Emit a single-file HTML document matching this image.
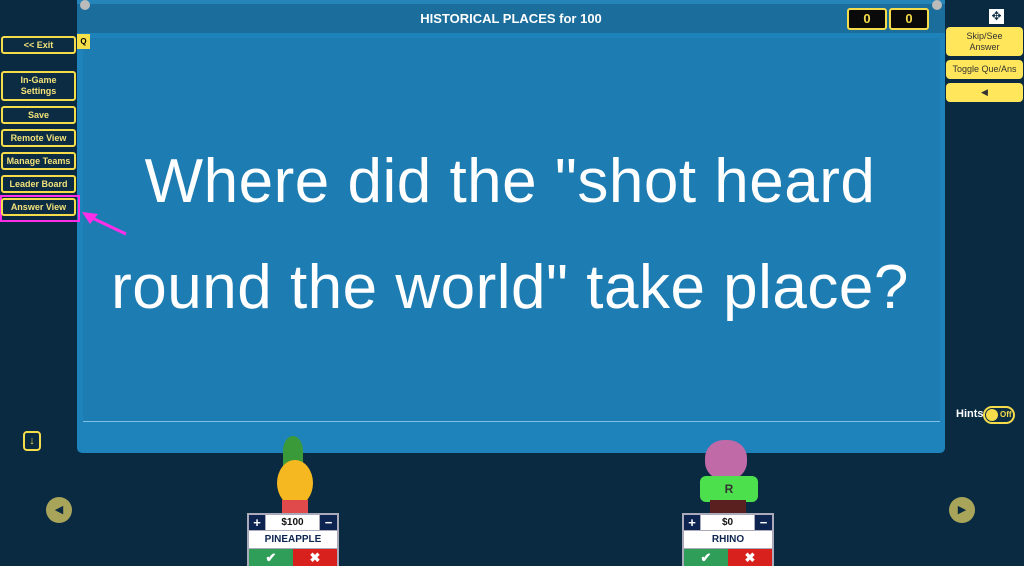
<!DOCTYPE html><html><head><style>
body{margin:0;width:1024px;height:566px;background:#0a2a42;position:relative;overflow:hidden;font-family:"Liberation Sans",sans-serif}
.a{position:absolute}
.lb{position:absolute;left:1px;width:75px;background:#0c2c44;border:2px solid #f5dc4a;border-radius:3px;color:#f3e27a;font-size:9px;font-weight:bold;text-align:center;box-sizing:border-box;display:flex;align-items:center;justify-content:center;line-height:11px}
.rb{position:absolute;left:946px;width:77px;background:#ffe65a;border-radius:4px;color:#333;font-size:9px;text-align:center;display:flex;align-items:center;justify-content:center;line-height:11px}
.sc{position:absolute;width:36px;height:18px;background:#0a0a0a;border:2px solid #f5dc4a;border-radius:3px;color:#f5dc4a;font-weight:bold;font-size:13px;text-align:center;line-height:18px;top:8px}
.card{position:absolute;top:513px;width:92px;height:53px;background:#aab;}
.card div{position:absolute;box-sizing:border-box;text-align:center;font-weight:bold}
</style></head><body>
<div class="a" style="left:77px;top:0;width:868px;height:453px;background:#1e83bb;border-radius:0 0 5px 5px"></div>
<div class="a" style="left:77px;top:4px;width:868px;height:29px;background:#1b6d9c"></div>
<div class="a" style="left:77px;top:0;width:868px;height:4px;background:#2585b8"></div>
<div class="a" style="left:83px;top:38px;width:857px;height:383px;background:#1d7db3;border-bottom:1px solid #7fc0e4"></div>
<div class="a" style="left:77px;top:11px;width:868px;text-align:center;color:#fff;font-weight:bold;font-size:13px">HISTORICAL PLACES for 100</div>
<div class="a" style="left:77px;top:34px;width:13px;height:15px;background:#f5e04a;font-size:8px;font-weight:bold;text-align:center;line-height:15px">Q</div>
<div class="a" style="left:80px;top:129px;width:860px;text-align:center;color:#fff;font-size:62px;line-height:106px;letter-spacing:0.5px">Where did the "shot heard<br>round the world" take place?</div>
<div class="sc" style="left:847px">0</div><div class="sc" style="left:889px">0</div>
<div class="a" style="left:80px;top:0;width:10px;height:10px;border-radius:50%;background:#bbb"></div>
<div class="a" style="left:932px;top:0;width:10px;height:10px;border-radius:50%;background:#bbb"></div>
<div class="lb" style="top:36px;height:18px">&lt;&lt; Exit</div>
<div class="lb" style="top:71px;height:30px">In-Game<br>Settings</div>
<div class="lb" style="top:106px;height:18px">Save</div>
<div class="lb" style="top:129px;height:18px">Remote View</div>
<div class="lb" style="top:152px;height:18px">Manage Teams</div>
<div class="lb" style="top:175px;height:18px">Leader Board</div>
<div class="a" style="left:0;top:195px;width:80px;height:27px;border:2px solid #ff2ee8;box-sizing:border-box"></div>
<div class="lb" style="top:198px;height:18px">Answer View</div>
<svg class="a" style="left:80px;top:208px" width="50" height="30"><line x1="46" y1="26" x2="8" y2="8" stroke="#ff2ee8" stroke-width="3"/><polygon points="2,4 18,6 10,16" fill="#ff2ee8"/></svg>
<div class="a" style="left:989px;top:9px;width:15px;height:15px;background:#fff;color:#0a2a42;font-size:12px;line-height:15px;text-align:center">✥</div>
<div class="rb" style="top:27px;height:29px">Skip/See<br>Answer</div>
<div class="rb" style="top:60px;height:19px">Toggle Que/Ans</div>
<div class="rb" style="top:83px;height:19px">◀</div>
<div class="a" style="left:956px;top:408px;color:#fff;font-weight:bold;font-size:11px">Hints</div>
<div class="a" style="left:983px;top:406px;width:28px;height:14px;border:2px solid #f5dc4a;border-radius:9px;background:#0c2c44"><div class="a" style="left:1px;top:1px;width:12px;height:12px;border-radius:50%;background:#f5dc4a"></div><span class="a" style="left:15px;top:2px;color:#f5dc4a;font-size:8px;font-weight:bold">Off</span></div>
<div class="a" style="left:23px;top:431px;width:14px;height:16px;border:2px solid #f5dc4a;border-radius:4px;color:#f5dc4a;font-size:11px;text-align:center;line-height:16px">↓</div>
<div class="a" style="left:46px;top:497px;width:26px;height:26px;border-radius:50%;background:#a8a55a;color:#0a2a42;font-size:11px;text-align:center;line-height:26px">◀</div>
<div class="a" style="left:949px;top:497px;width:26px;height:26px;border-radius:50%;background:#a8a55a;color:#0a2a42;font-size:11px;text-align:center;line-height:26px">▶</div>
<div class="a" style="left:283px;top:436px;width:20px;height:30px;background:#3a9a3a;border-radius:50% 50% 0 0"></div>
<div class="a" style="left:277px;top:460px;width:36px;height:46px;background:#f5b820;border-radius:50%"></div>
<div class="a" style="left:282px;top:500px;width:26px;height:14px;background:#e04a4a"></div>
<div class="a" style="left:705px;top:440px;width:42px;height:40px;background:#c06aa8;border-radius:45%"></div>
<div class="a" style="left:700px;top:476px;width:58px;height:26px;background:#4de04d;border-radius:6px;color:#333;font-weight:bold;font-size:12px;text-align:center;line-height:26px">R</div>
<div class="a" style="left:710px;top:500px;width:36px;height:14px;background:#5a2020"></div>
<div class="card" style="left:247px">
<div style="left:2px;top:2px;width:16px;height:15px;background:#0e2450;color:#fff;font-size:13px;line-height:15px">+</div>
<div style="left:19px;top:2px;width:53px;height:15px;background:#fff;font-size:10px;line-height:15px;color:#111">$100</div>
<div style="left:73px;top:2px;width:17px;height:15px;background:#0e2450;color:#fff;font-size:13px;line-height:15px">−</div>
<div style="left:2px;top:18px;width:88px;height:17px;background:#fff;font-size:10px;line-height:17px;color:#0e2450">PINEAPPLE</div>
<div style="left:2px;top:36px;width:44px;height:17px;background:#2e9e58;color:#fff;font-size:13px;line-height:17px">✔</div>
<div style="left:46px;top:36px;width:44px;height:17px;background:#d8211c;color:#fff;font-size:13px;line-height:17px">✖</div>
</div>
<div class="card" style="left:682px">
<div style="left:2px;top:2px;width:16px;height:15px;background:#0e2450;color:#fff;font-size:13px;line-height:15px">+</div>
<div style="left:19px;top:2px;width:53px;height:15px;background:#fff;font-size:10px;line-height:15px;color:#111">$0</div>
<div style="left:73px;top:2px;width:17px;height:15px;background:#0e2450;color:#fff;font-size:13px;line-height:15px">−</div>
<div style="left:2px;top:18px;width:88px;height:17px;background:#fff;font-size:10px;line-height:17px;color:#0e2450">RHINO</div>
<div style="left:2px;top:36px;width:44px;height:17px;background:#2e9e58;color:#fff;font-size:13px;line-height:17px">✔</div>
<div style="left:46px;top:36px;width:44px;height:17px;background:#d8211c;color:#fff;font-size:13px;line-height:17px">✖</div>
</div>
</body></html>
